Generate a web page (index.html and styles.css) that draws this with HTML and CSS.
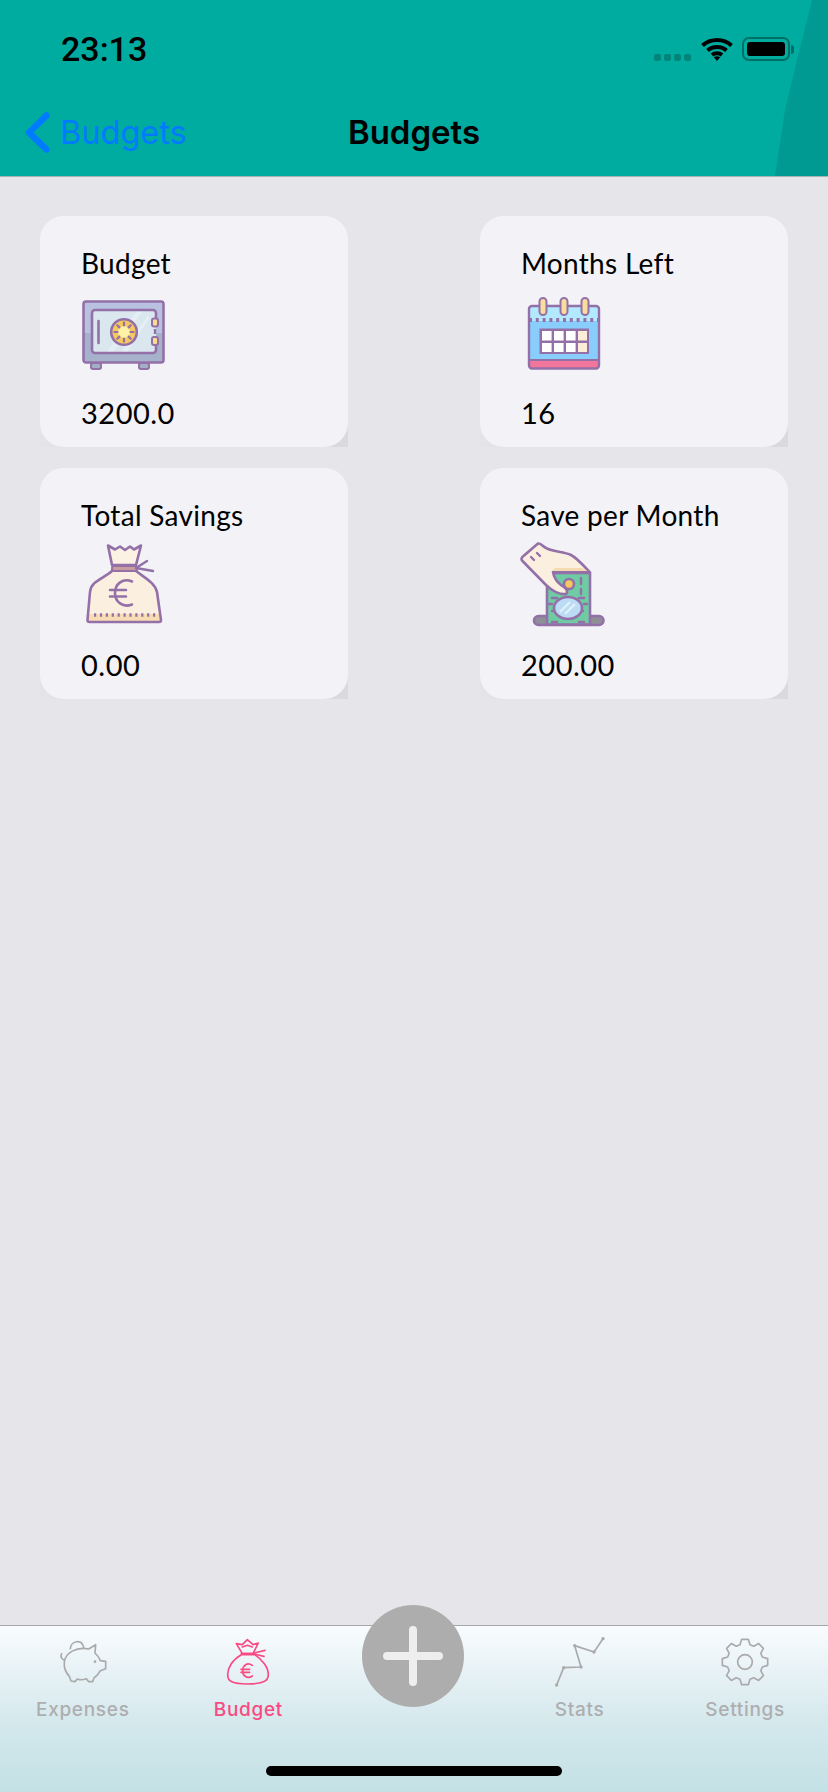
FILE: index.html
```html
<!DOCTYPE html>
<html lang="en">
<head>
<meta charset="utf-8">
<title>Budgets</title>
<link rel="stylesheet" href="styles.css">
</head>
<body>
<div class="screen">
  <header class="header">
    <div class="status">
      <span class="time">23:13</span>
      <div class="status-icons">
        <div class="signal"><i></i><i></i><i></i><i></i></div>
        <svg class="wifi" viewBox="0 0 32 24"><path d="M1.5 8.5C9.5 1 22.500 1 30.500 8.500" /><path d="M6.500 13.500C11.500 8.800 20.500 8.800 25.500 13.500"/><path d="M11 18C13.800 15.600 18.200 15.600 21 18"/><path class="wifi-dot" d="M16 24L12.800 20.300C14.800 19 17.200 19 19.200 20.300Z"/></svg>
        <div class="battery"><div class="battery-fill"></div></div>
        <div class="battery-nub"></div>
      </div>
    </div>
    <nav class="nav">
      <div class="back">
        <svg class="chevron" viewBox="0 0 25 41"><path d="M21.500 3.500L4 20.500L21.500 37.500"/></svg>
        <span class="back-label">Budgets</span>
      </div>
      <h1 class="title">Budgets</h1>
      <div class="nav-end"></div>
    </nav>
  </header>

  <main class="main">
    <section class="card-grid">
      <article class="card">
        <h2 class="card-title">Budget</h2>
        <svg class="card-icon" viewBox="0 0 90 90">
          <rect x="12" y="73" width="10" height="6" rx="2" fill="#a3afc7" stroke="#9470a8" stroke-width="2"/>
          <rect x="60" y="73" width="10" height="6" rx="2" fill="#a3afc7" stroke="#9470a8" stroke-width="2"/>
          <rect x="4.500" y="11.500" width="80" height="61" rx="2.500" fill="#b8c2e0"/>
          <path d="M4.500 43H84.500V70a2.500 2.500 0 0 1-2.500 2.500H7A2.500 2.500 0 0 1 4.500 70Z" fill="#a6b2cc"/>
          <rect x="4.500" y="11.500" width="80" height="61" rx="2.500" fill="none" stroke="#9470a8" stroke-width="2.600"/>
          <path d="M77 29V56H14V22H77Z" fill="#dbe7ef"/>
          <rect x="14" y="21" width="62" height="41" fill="#dbe7ef"/>
          <path d="M28 62L58 21H64L34 62ZM42 62L70 24V29L48 62Z" fill="#e5eef4"/>
          <path d="M77 29V23a3 3 0 0 0-3-3H16a3 3 0 0 0-3 3V60a3 3 0 0 0 3 3H74a3 3 0 0 0 3-3V56" fill="none" stroke="#9470a8" stroke-width="2.600"/>
          <path d="M19.500 31V53" stroke="#9470a8" stroke-width="2.600" stroke-linecap="round"/>
          <circle cx="45" cy="42" r="12.800" fill="#f5c95e" stroke="#9470a8" stroke-width="2.600"/>
          <circle cx="45" cy="42" r="6" fill="#fdf2a8"/>
          <path d="M45 32.500V35.500M45 48.500V51.500M35.500 42H38.500M51.500 42H54.500M38.300 35.300L40.400 37.400M49.600 46.600L51.700 48.700M38.300 48.700L40.400 46.600M49.600 37.400L51.700 35.300" stroke="#9470a8" stroke-width="2.200" stroke-linecap="round"/>
          <rect x="73" y="28.500" width="6" height="8" rx="2" fill="#f8dd8f" stroke="#9470a8" stroke-width="2"/>
          <rect x="73" y="47" width="6" height="8" rx="2" fill="#f8dd8f" stroke="#9470a8" stroke-width="2"/>
          <path d="M76 39V44" stroke="#9470a8" stroke-width="2.400"/>
        </svg>
        <p class="card-value">3200.0</p>
      </article>

      <article class="card">
        <h2 class="card-title">Months Left</h2>
        <svg class="card-icon" viewBox="0 0 90 90">
          <rect x="10" y="16" width="70" height="62.500" rx="3" fill="#88cdfb"/>
          <path d="M10 31V19a3 3 0 0 1 3-3H77a3 3 0 0 1 3 3V31Z" fill="#b2e9ff"/>
          <path d="M10 70H80V75.500a3 3 0 0 1-3 3H13a3 3 0 0 1-3-3Z" fill="#f2759b"/>
          <path d="M11 70H79" stroke="#9470a8" stroke-width="2"/>
          <rect x="10" y="16" width="70" height="62.500" rx="3" fill="none" stroke="#9470a8" stroke-width="2.400"/>
          <path d="M10 30H80" stroke="#9470a8" stroke-width="4" stroke-dasharray="3 3.800"/>
          <rect x="20.500" y="38.500" width="49.500" height="25.500" fill="#9470a8"/>
          <g fill="#ffffff">
            <rect x="23" y="41" width="9.600" height="9.500"/><rect x="35" y="41" width="9.600" height="9.500"/><rect x="47" y="41" width="9.600" height="9.500"/>
            <rect x="23" y="53" width="9.600" height="9"/><rect x="35" y="53" width="9.600" height="9"/><rect x="47" y="53" width="9.600" height="9"/>
          </g>
          <g fill="#fcedd8"><rect x="59" y="41" width="9" height="9.500"/><rect x="59" y="53" width="9" height="9"/></g>
          <g fill="#f8dd9c" stroke="#9470a8" stroke-width="2">
            <rect x="20.500" y="8" width="7" height="17" rx="3.500"/><rect x="41.500" y="8" width="7" height="17" rx="3.500"/><rect x="62.500" y="8" width="7" height="17" rx="3.500"/>
          </g>
        </svg>
        <p class="card-value">16</p>
      </article>

      <article class="card">
        <h2 class="card-title">Total Savings</h2>
        <svg class="card-icon" viewBox="0 0 90 90">
          <path d="M29 3.500L36 7.500L41 4.500L46 8L51 4.500L55 7.500L62 3.500L57 23H33Z" fill="#fbf2e4" stroke="#9470a8" stroke-width="2.600" stroke-linejoin="round"/>
          <path d="M33 29C24 37 12 39 11 50L8.500 78a2 2 0 0 0 2 2H80a2 2 0 0 0 2-2L78 50C76 41 66 36 57 29Z" fill="#fbf0df"/>
          <path d="M10 72L9 80H81L80 72Z" fill="#f8dcb4"/>
          <path d="M33 29C24 37 12 39 11 50L8.500 78a2 2 0 0 0 2 2H80a2 2 0 0 0 2-2L78 50C76 41 66 36 57 29" fill="none" stroke="#9470a8" stroke-width="2.600" stroke-linecap="round"/>
          <path d="M15 73H78" stroke="#9470a8" stroke-width="3.600" stroke-dasharray="2.200 3.700"/>
          <rect x="33" y="24" width="25" height="5" rx="2" fill="#c99d9d" stroke="#9470a8" stroke-width="2"/>
          <path d="M57 26L68 19M57 26L74 29" fill="none" stroke="#9470a8" stroke-width="2.400" stroke-linecap="round"/>
          <path d="M53 39.500C44 35.500 36 42 36 51C36 60 44 66 53 62.500M31 48H47M31 54.500H47" fill="none" stroke="#9470a8" stroke-width="2.600" stroke-linecap="round"/>
        </svg>
        <p class="card-value">0.00</p>
      </article>

      <article class="card">
        <h2 class="card-title">Save per Month</h2>
        <svg class="card-icon" viewBox="0 0 90 90">
          <rect x="15" y="74" width="69.500" height="9" rx="4.500" fill="#8e8e96" stroke="#9470a8" stroke-width="2.600"/>
          <rect x="28" y="31" width="43" height="51.500" fill="#6fcba4" stroke="#9470a8" stroke-width="2.600"/>
          <path d="M62 36V42M62 47V52M33 56H38M60 56H65M33 69H37M60 69H64M30 62H33M65 62H68M33 80H38M60 80H65" stroke="#9470a8" stroke-width="2.400" stroke-linecap="round"/>
          <ellipse cx="49" cy="66" rx="14" ry="11" fill="#bcdcf5" stroke="#9470a8" stroke-width="2.600"/>
          <path d="M41 70L51 60M46 72L56 62" stroke="#e3f1fb" stroke-width="2"/>
          <circle cx="50" cy="42" r="5" fill="#f5c95e" stroke="#9470a8" stroke-width="2.600"/>
          <path d="M19 1.500C21 1 23 3 24 4C30 10 44 9 52 13C58 16 65 24 70.500 30H34C35 36 38 40 42 43C46 45 50 49 47 52C41 53 33 49 27 43L3.500 19C1.500 17 3 15 4.500 14Z" fill="#fbefdf" stroke="#9470a8" stroke-width="2.600" stroke-linejoin="round"/>
          <path d="M35 26H63L68.500 29H35Z" fill="#f5d9b0"/>
          <path d="M12 15L15 18M18 11L21 14" stroke="#9470a8" stroke-width="2.400" stroke-linecap="round"/>
        </svg>
        <p class="card-value">200.00</p>
      </article>
    </section>
  </main>

  <footer class="tabbar">
    <div class="tab">
      <svg class="tab-icon" viewBox="170 147 150 150"><path d="M207 182C208 160 240 150 247 178"/><path d="M262 183L283 170L281 195C290 203 295 212 297 218L313 220L313 242L297 248C292 258 285 265 278 270L274 281L262 281L255 272C245 276 235 276 228 273L221 281L209 279L204 265C192 252 187 238 189 222C192 195 225 175 262 183Z"/><path d="M188 216C180 213 177 205 181 197"/><circle class="dot" cx="281" cy="221" r="4"/></svg>
      <span class="tab-label">Expenses</span>
    </div>
    <div class="tab tab-active">
      <svg class="tab-icon" viewBox="672 147 150 150"><path d="M727 200C700 215 686 240 686 260C686 280 700 288 745 288C790 288 808 280 808 260C808 238 790 215 767 200Z"/><path d="M730 197L712 167L730 170L745 155L762 170L778 165L762 197Z"/><path d="M727 197H767M730 177L745 172L760 177M765 195L798 187M765 198L795 205"/><path d="M760 232C745 222 731 232 731 248C731 264 745 274 760 264M726 244H752M726 253H752"/></svg>
      <span class="tab-label">Budget</span>
    </div>
    <div class="tab"></div>
    <div class="tab">
      <svg class="tab-icon" viewBox="432 147 150 150"><path d="M437 291L458 239L510 237L491 173L549 192L576 152"/><g class="dot"><circle cx="437" cy="291" r="5"/><circle cx="458" cy="239" r="5"/><circle cx="510" cy="237" r="5"/><circle cx="491" cy="173" r="5"/><circle cx="549" cy="192" r="5"/><circle cx="576" cy="152" r="5"/></g></svg>
      <span class="tab-label">Stats</span>
    </div>
    <div class="tab">
      <svg class="tab-icon" viewBox="-75 -75 150 150"><path d="M-15-52L-10-68H10L15-52L26.200-47.400L41-55.200L55.200-41L47.400-26.200L52-15L68-10V10L52 15L47.400 26.200L55.200 41L41 55.200L26.200 47.400L15 52L10 68H-10L-15 52L-26.200 47.400L-41 55.200L-55.200 41L-47.400 26.200L-52 15L-68 10V-10L-52-15L-47.400-26.200L-55.200-41L-41-55.200L-26.200-47.400Z"/><circle r="22"/></svg>
      <span class="tab-label">Settings</span>
    </div>
    <button class="add-button" aria-label="Add"><svg viewBox="0 0 60 60"><path d="M30 4V56M4 30H56"/></svg></button>
    <div class="home-indicator"></div>
  </footer>
</div>
</body>
</html>
```

FILE: styles.css
```css
* { box-sizing: border-box; }

html, body { margin: 0; padding: 0; }

body {
  width: 828px;
  height: 1792px;
  overflow: hidden;
  background: #e6e5ea;
  font-family: Roboto, "Liberation Sans", sans-serif;
}

.screen {
  display: flex;
  flex-direction: column;
  height: 1792px;
}

.header {
  position: relative;
  flex: none;
  height: 177px;
  background: #00aba0;
  border-bottom: 1px solid #a6b4b2;
  overflow: hidden;
}

.header::after {
  content: "";
  position: absolute;
  inset: 0;
  background: #009a92;
  clip-path: polygon(775px 176px, 785px 110px, 797px 60px, 812px 0, 828px 0, 828px 176px);
}

.status {
  position: relative;
  z-index: 1;
  display: flex;
  justify-content: space-between;
  align-items: center;
  height: 88px;
  padding: 10px 34px 0 61px;
}

.time {
  font-size: 34px;
  font-weight: 500;
  color: #000;
}

.status-icons {
  display: flex;
  align-items: center;
}

.signal {
  display: flex;
  gap: 3px;
  margin: 16px 10px 0 0;
}

.signal i {
  width: 7px;
  height: 7px;
  border-radius: 2px;
  background: #00857b;
}

.wifi {
  width: 32px;
  height: 24px;
  margin-right: 9px;
  fill: none;
  stroke: #000;
  stroke-width: 4;
}

.wifi-dot {
  fill: #000;
  stroke: none;
}

.battery {
  width: 48px;
  height: 24px;
  padding: 3px;
  border: 2px solid #006e68;
  border-radius: 7px;
}

.battery-fill {
  height: 100%;
  background: #000;
  border-radius: 3px;
}

.battery-nub {
  width: 3px;
  height: 9px;
  margin-left: 1px;
  background: #006e68;
  border-radius: 0 3px 3px 0;
}

.nav {
  position: relative;
  z-index: 1;
  display: grid;
  grid-template-columns: 1fr auto 1fr;
  align-items: center;
  height: 88px;
}

.back {
  display: flex;
  align-items: center;
  padding: 0 0 0 25px;
}

.chevron {
  width: 25px;
  height: 41px;
  margin-right: 10px;
  fill: none;
  stroke: #007aff;
  stroke-width: 6.500;
  stroke-linecap: round;
  stroke-linejoin: round;
}

.back-label {
  font-family: Inter, Roboto, sans-serif;
  font-size: 32.500px;
  color: #007aff;
}

.title {
  margin: 0;
  font-family: Inter, Roboto, sans-serif;
  font-size: 33px;
  font-weight: 600;
  color: #000;
}

.main {
  flex: 1;
  padding: 39px 40px 0;
}

.card-grid {
  display: grid;
  grid-template-columns: 308px 308px;
  justify-content: space-between;
  row-gap: 21px;
}

.card {
  position: relative;
  z-index: 0;
  height: 231px;
  padding: 29px 0 0 41px;
  border-radius: 24px;
  background: #f2f2f7;
  font-family: Lato, "Liberation Sans", sans-serif;
  color: #000;
}

.card::before {
  content: "";
  position: absolute;
  z-index: -2;
  inset: 50% 0 0 0;
  background: linear-gradient(to right, #e3e3e8, #d9d9de);
}

.card::after {
  content: "";
  position: absolute;
  z-index: -1;
  inset: 0;
  border-radius: 24px;
  background: #f2f2f7;
}

.card-title {
  height: 45px;
  margin: 0;
  font-size: 28px;
  line-height: 36px;
  font-weight: 400;
  letter-spacing: 0.3px;
}

.card-icon {
  display: block;
  width: 90px;
  height: 90px;
  margin-left: -2px;
}

.card-value {
  margin: 0;
  padding-top: 15px;
  font-size: 29px;
  line-height: 36px;
  letter-spacing: 0.5px;
}

.tabbar {
  position: relative;
  flex: none;
  display: grid;
  grid-template-columns: repeat(5, 1fr);
  height: 167px;
  background: linear-gradient(#f9fcfe 0, #e6f1f5 50px, #d3e8ec 100px, #c3e1e5 167px);
  border-top: 1px solid #a6a6a8;
}

.tab {
  display: flex;
  flex-direction: column;
  align-items: center;
  padding-top: 11px;
  height: 110px;
  font-family: Inter, Roboto, sans-serif;
  color: #aeaeb0;
}

.tab-icon {
  width: 50px;
  height: 50px;
  fill: none;
  stroke: #aaaaaa;
  stroke-width: 5;
  stroke-linejoin: round;
  stroke-linecap: round;
}

.tab-icon .dot { fill: #aaaaaa; stroke: none; }

.tab-label {
  margin-top: 11px;
  font-size: 19px;
  line-height: 24px;
  font-weight: 500;
  letter-spacing: 0.7px;
}

.tab-active { color: #f94a82; }

.tab-active .tab-icon { stroke: #f94a82; }

.add-button {
  position: absolute;
  left: 362px;
  top: -21px;
  display: flex;
  align-items: center;
  justify-content: center;
  width: 102px;
  height: 102px;
  padding: 0;
  border: 0;
  border-radius: 50%;
  background: #adadad;
}

.add-button svg {
  width: 60px;
  height: 60px;
  fill: none;
  stroke: #eeeeee;
  stroke-width: 8;
  stroke-linecap: round;
}

.home-indicator {
  position: absolute;
  left: 266px;
  bottom: 16px;
  width: 296px;
  height: 10px;
  border-radius: 5px;
  background: #000;
}
```
